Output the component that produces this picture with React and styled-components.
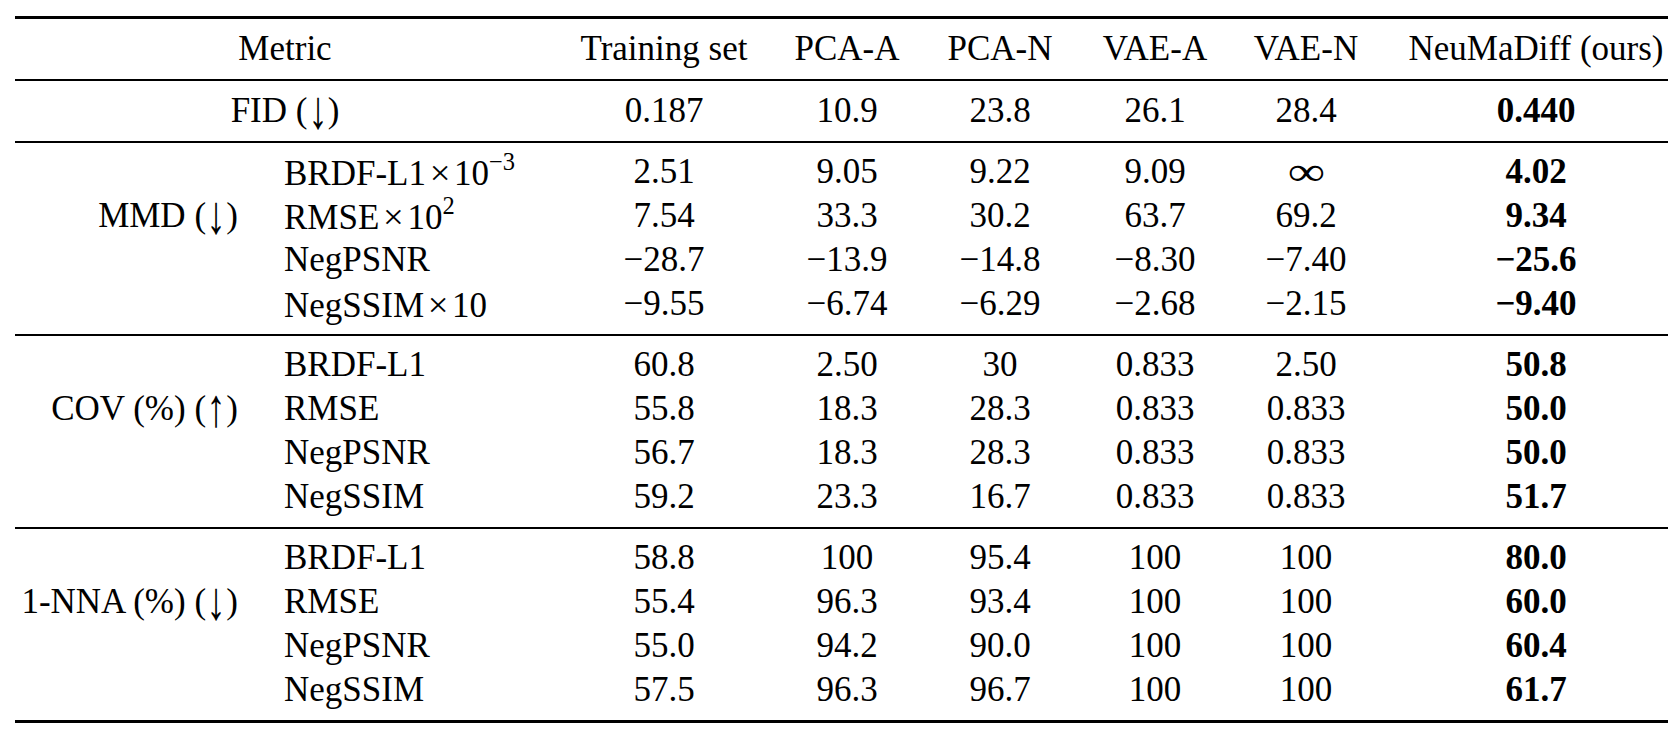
import styled, { createGlobalStyle } from 'styled-components'

const GlobalStyle = createGlobalStyle`
  html, body {
    margin: 0;
    padding: 0;
    background: #ffffff;
  }
  body {
    font-family: "Liberation Serif", "Times New Roman", serif;
    color: #000000;
  }
`

const COLUMNS = '246px 294px 218px 148px 158px 152px 150px 287px'

const Table = styled.div`
  margin: 16px 0 0 15px;
  width: 1653px;
  border-top: 3px solid #000;
  border-bottom: 3px solid #000;
  font-size: 35px;
`

const Row = styled.div`
  display: grid;
  grid-template-columns: ${COLUMNS};
  align-items: center;
  height: ${(p) => (p.$tall ? '60px' : '44px')};
  border-bottom: ${(p) => (p.$rule ? '2px solid #000' : 'none')};
`

const Section = styled.div`
  padding: 7px 0 8px;
  border-bottom: ${(p) => (p.$last ? 'none' : '2px solid #000')};
`

const Cell = styled.div`
  white-space: nowrap;
  text-align: ${(p) => p.$align || 'center'};
  font-weight: ${(p) => (p.$bold ? 700 : 400)};
  grid-column: ${(p) => (p.$span ? `span ${p.$span}` : 'auto')};

  &:last-child {
    padding-left: 23px;
  }
`

const GroupCell = styled(Cell)`
  text-align: right;
  padding-right: 23px;
`

const MetricCell = styled(Cell)`
  text-align: left;
  padding-left: 23px;
`

const Times = styled.span`
  margin: 0 0.1em;
  font-size: 1.05em;
`

const Sup = styled.sup`
  font-size: 0.7em;
  line-height: 0;
  vertical-align: 0.62em;
`

// math style arrow: taller than the text font's own glyph
const Arrow = styled.span`
  display: inline-block;
  margin: 0 0.04em;
  transform: scale(1.1, 1.55);
  transform-origin: 50% 52%;
`

const Infinity = styled.span`
  display: inline-block;
  transform: scale(1.5, 1.15);
`

const Dir = ({ up }) => (
  <>
    (<Arrow>{up ? '↑' : '↓'}</Arrow>)
  </>
)

const methods = ['Training set', 'PCA-A', 'PCA-N', 'VAE-A', 'VAE-N', 'NeuMaDiff (ours)']

const sections = [
  {
    label: <>MMD <Dir /></>,
    rows: [
      [<>BRDF-L1<Times>×</Times>10<Sup>−3</Sup></>, '2.51', '9.05', '9.22', '9.09', <Infinity>∞</Infinity>, '4.02'],
      [<>RMSE<Times>×</Times>10<Sup>2</Sup></>, '7.54', '33.3', '30.2', '63.7', '69.2', '9.34'],
      ['NegPSNR', '−28.7', '−13.9', '−14.8', '−8.30', '−7.40', '−25.6'],
      [<>NegSSIM<Times>×</Times>10</>, '−9.55', '−6.74', '−6.29', '−2.68', '−2.15', '−9.40'],
    ],
  },
  {
    label: <>COV (%) <Dir up /></>,
    rows: [
      ['BRDF-L1', '60.8', '2.50', '30', '0.833', '2.50', '50.8'],
      ['RMSE', '55.8', '18.3', '28.3', '0.833', '0.833', '50.0'],
      ['NegPSNR', '56.7', '18.3', '28.3', '0.833', '0.833', '50.0'],
      ['NegSSIM', '59.2', '23.3', '16.7', '0.833', '0.833', '51.7'],
    ],
  },
  {
    label: <>1-NNA (%) <Dir /></>,
    rows: [
      ['BRDF-L1', '58.8', '100', '95.4', '100', '100', '80.0'],
      ['RMSE', '55.4', '96.3', '93.4', '100', '100', '60.0'],
      ['NegPSNR', '55.0', '94.2', '90.0', '100', '100', '60.4'],
      ['NegSSIM', '57.5', '96.3', '96.7', '100', '100', '61.7'],
    ],
  },
]

const App = () => {
  return (
    <>
      <GlobalStyle />
      <Table>
        <Row $tall $rule>
          <Cell $span={2}>Metric</Cell>
          {methods.map((m) => (
            <Cell key={m}>{m}</Cell>
          ))}
        </Row>
        <Row $tall $rule>
          <Cell $span={2}>FID <Dir /></Cell>
          <Cell>0.187</Cell>
          <Cell>10.9</Cell>
          <Cell>23.8</Cell>
          <Cell>26.1</Cell>
          <Cell>28.4</Cell>
          <Cell $bold>0.440</Cell>
        </Row>
        {sections.map((section, si) => (
          <Section key={si} $last={si === sections.length - 1}>
            {section.rows.map(([metric, ...values], ri) => (
              <Row key={ri}>
                <GroupCell>{ri === 1 ? section.label : ''}</GroupCell>
                <MetricCell>{metric}</MetricCell>
                {values.map((v, vi) => (
                  <Cell key={vi} $bold={vi === values.length - 1}>
                    {v}
                  </Cell>
                ))}
              </Row>
            ))}
          </Section>
        ))}
      </Table>
    </>
  )
}

export default App
